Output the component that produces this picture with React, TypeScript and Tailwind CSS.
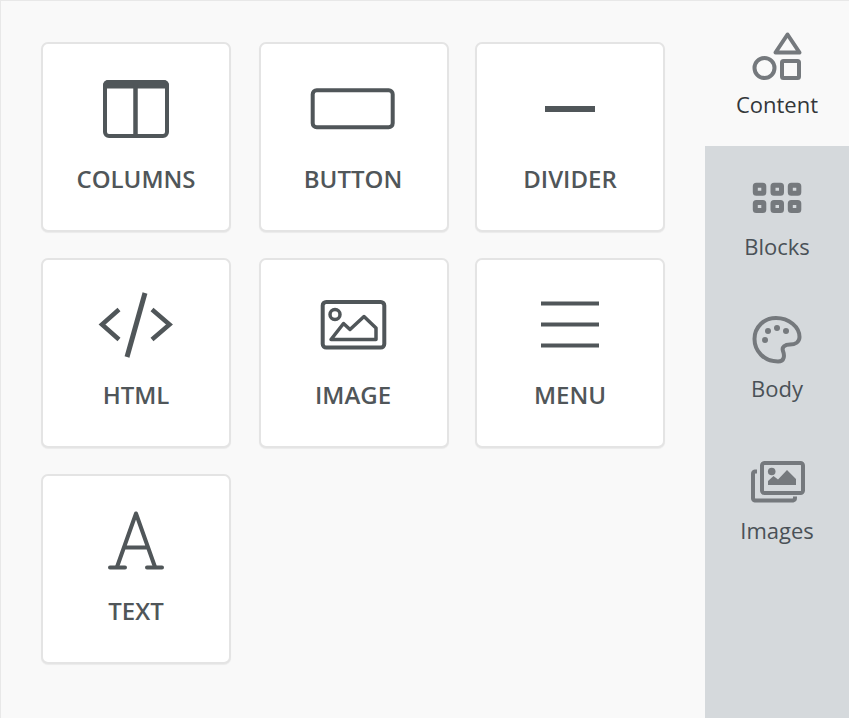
import type { ReactNode } from "react";

const ink = "#505659";
const side = "#75797d";

interface CardProps {
  label: string;
  viewBox: string;
  nudge?: boolean;
  children: ReactNode;
}

function Card({ label, viewBox, nudge, children }: CardProps) {
  return (
    <div
      className={`w-[190px] h-[190px] rounded-[7px] bg-white border-2 border-[#e4e4e4] shadow-[0_1px_1px_rgba(0,0,0,0.06)] pt-[25px] flex flex-col items-center ${
        nudge ? "pr-[2px]" : ""
      }`}
    >
      <svg width="100" height="80" viewBox={viewBox} fill="none" stroke={ink} strokeWidth="4">
        {children}
      </svg>
      <span className="mt-[15px] text-[24px] leading-[30px] font-semibold text-[#505659]">{label}</span>
    </div>
  );
}

interface TabProps {
  label: string;
  viewBox: string;
  active?: boolean;
  children: ReactNode;
}

function Tab({ label, viewBox, active, children }: TabProps) {
  return (
    <div className={`flex flex-col items-center ${active ? "h-[145px] pt-[26px]" : "h-[142px] pt-[23px]"}`}>
      <svg width="100" height="60" viewBox={viewBox} fill="none" stroke={side} strokeWidth="4">
        {children}
      </svg>
      <span className={`mt-[2px] text-[22px] leading-[30px] ${active ? "text-[#33373a]" : "text-[#4a5157]"}`}>
        {label}
      </span>
    </div>
  );
}

export default function App() {
  return (
    <div className="w-[849px] h-[718px] flex bg-[#f9f9f9] border-l border-t border-[#e8e8e8] font-['Open_Sans',sans-serif]">
      <main className="w-[704px] pl-[40px] pt-[41px]">
        <div className="grid grid-cols-[218px_216px_190px] auto-rows-[190px] gap-y-[26px]">
          <Card label="COLUMNS" viewBox="86 69 100 80">
            <rect x="105" y="82" width="62" height="54" rx="4" />
            <path d="M103 88.500h66V85a5 5 0 0 0-5-5h-56a5 5 0 0 0-5 5z" fill={ink} stroke="none" />
            <path d="M135.500 84v52" strokeWidth="4.500" />
          </Card>
          <Card label="BUTTON" viewBox="303 69 100 80" nudge>
            <rect x="312.700" y="90.300" width="80" height="37" rx="4" />
          </Card>
          <Card label="DIVIDER" viewBox="520 69 100 80">
            <path d="M545 109h50" strokeWidth="6" />
          </Card>
          <Card label="HTML" viewBox="86 285 100 80">
            <g strokeWidth="4.500">
              <path d="M119 309.500L102 324.500L119 339.500" />
              <path d="M152 309.500L169.500 324.500L152 339.500" />
              <path d="M145 293L127 357" strokeWidth="5" />
            </g>
          </Card>
          <Card label="IMAGE" viewBox="303 285 100 80" nudge>
            <rect x="322.700" y="302" width="61.600" height="45.500" rx="3.500" />
            <circle cx="335" cy="314.500" r="5" strokeWidth="3.500" />
            <path d="M331 339.500L343.500 323.500L350 329.500L364 316.500L376 328V339.500z" strokeWidth="3.500" strokeLinejoin="round" />
          </Card>
          <Card label="MENU" viewBox="520 285 100 80">
            <path d="M541 303.500h58M541 324.500h58M541 345.500h58" strokeWidth="4" />
          </Card>
          <Card label="TEXT" viewBox="86 501 100 80">
            <path d="M117 567L136 513.500L155 567M123.500 547.500H148" strokeWidth="4" strokeLinejoin="round" />
            <path d="M110 567.500H125M147 567.500H162" strokeWidth="4" strokeLinecap="round" />
          </Card>
        </div>
      </main>
      <aside className="w-[144px] flex flex-col">
        <Tab label="Content" viewBox="727 27 100 60" active>
          <path d="M787.500 34.500L799.500 52.500H775.500z" strokeLinejoin="round" />
          <circle cx="764.500" cy="68" r="10" />
          <rect x="782" y="61" width="17" height="17" rx="1.500" />
        </Tab>
        <div className="flex-1 bg-[#d5d9dc]">
          <Tab label="Blocks" viewBox="727 169 100 60">
            <g strokeWidth="5">
              <rect x="755.300" y="185.300" width="8.500" height="8" rx="1" />
              <rect x="773" y="185.300" width="8.500" height="8" rx="1" />
              <rect x="790.300" y="185.300" width="8.500" height="8" rx="1" />
              <rect x="755.300" y="202.500" width="8.500" height="8" rx="1" />
              <rect x="773" y="202.500" width="8.500" height="8" rx="1" />
              <rect x="790.300" y="202.500" width="8.500" height="8" rx="1" />
            </g>
          </Tab>
          <Tab label="Body" viewBox="727 311 100 60">
            <path d="M776 318C789 318 799.500 327 799.500 337C799.500 342 795 344.500 790 344.500C785 344.500 781.500 347 783 351C784.500 355 785 361.500 778 361.500C764 361.500 754.500 351 754.500 339C754.500 327 764 318 776 318z" />
            <g fill={side} stroke="none">
              <circle cx="768" cy="331" r="3" />
              <circle cx="777" cy="328" r="3" />
              <circle cx="786" cy="331" r="3" />
              <circle cx="765" cy="340" r="3" />
            </g>
          </Tab>
          <Tab label="Images" viewBox="727 453 100 60">
            <rect x="762" y="463" width="41" height="30" rx="2.500" />
            <path d="M757 471.500H755A2.500 2.500 0 0 0 753 474V498A2.500 2.500 0 0 0 755 500.500H793A2.500 2.500 0 0 0 795 498V496.500" />
            <g fill={side} stroke="none">
              <circle cx="771.700" cy="471.500" r="3.800" />
              <path d="M768 485V481L773.500 476L778 479.500L787 470L796 479V485z" />
            </g>
          </Tab>
        </div>
      </aside>
    </div>
  );
}
